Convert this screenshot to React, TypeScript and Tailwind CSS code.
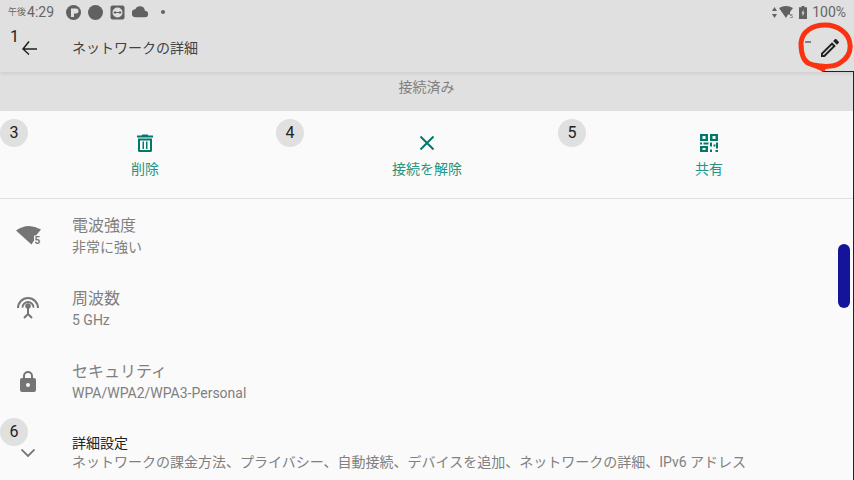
import type { ReactNode } from 'react'

const fontStack = '[font-family:Roboto,"Noto_Sans_CJK_JP",sans-serif]'

function Badge({ n, className }: { n: string; className: string }) {
  return (
    <div className={`absolute w-[28px] h-[28px] rounded-full bg-[#e0e0e0] text-[#222] text-base flex items-center justify-center ${className}`}>
      {n}
    </div>
  )
}

function TrashIcon() {
  return (
    <svg width="16" height="18" viewBox="0 0 16 18" fill="#00796b">
      <path d="M0 1.500h4.500L5.500 0.500h5l1 1H16v2H0z" />
      <path fillRule="evenodd" d="M1 4.500h14V16.500a1.500 1.500 0 0 1-1.500 1.500h-11A1.500 1.500 0 0 1 1 16.500zM3 6.500v9.500h10V6.500z" />
      <path d="M5.500 7.500h1.500v7.500H5.500zM9 7.500h1.500v7.500H9z" />
    </svg>
  )
}

function CloseIcon() {
  return (
    <svg width="14" height="14" viewBox="0 0 14 14" fill="none" stroke="#00796b" strokeWidth="2">
      <path d="M0.500 0.500L13.500 13.500M13.500 0.500L0.500 13.500" />
    </svg>
  )
}

function QrIcon() {
  return (
    <svg width="18" height="18" viewBox="0 0 18 18" fill="#00796b">
      <path fillRule="evenodd" d="M0 0h8v7H0zM2.500 2v3h3V2zM10 0h8v7h-8zM12.500 2v3h3V2zM0 12h8v6H0zM2.500 14v2h3v-2z" />
      <path d="M0 8.500h2v2H0zM3.500 8.500h5v2h-5zM10 8.500h2v4h-2zM13.500 10.500h2v2h-2zM16 8.500h2v6h-2zM10 15.500h2V18h-2zM15.500 16h2.500v2h-2.500z" />
    </svg>
  )
}

function Action({ icon, label }: { icon: ReactNode; label: string }) {
  return (
    <div className="flex-1 flex flex-col items-center pt-[21px]">
      <div className="h-[22px] flex items-center justify-center">{icon}</div>
      <span className="mt-[5px] text-sm leading-[20px] text-[#26957f]">{label}</span>
    </div>
  )
}

function Row({ icon, title, sub }: { icon: ReactNode; title: string; sub: string }) {
  return (
    <div className="h-[73px] flex items-center">
      <div className="w-[72px] pl-[16px] flex items-center">
        <div className="w-[24px] h-[24px] flex items-center justify-center">{icon}</div>
      </div>
      <div className="pb-[2px]">
        <div className="text-base leading-[24px] text-[#808080]">{title}</div>
        <div className="text-sm leading-[18px] text-[#808080]">{sub}</div>
      </div>
    </div>
  )
}

export default function App() {
  return (
    <div className={`relative w-[854px] h-[480px] overflow-hidden bg-[#fafafa] ${fontStack}`}>
      <div className="relative z-10 bg-[#e0e0e0] shadow-[0_2px_3px_rgba(0,0,0,0.08)]">
        {/* status bar */}
        <div className="h-[24px] flex items-center pl-[8px] pr-[8px] text-[#666]">
          <span className="text-[9px] mt-[2px] mr-[1px]">午後</span>
          <span className="text-sm">4:29</span>
          <div className="ml-[12px] flex items-center gap-[7px]">
            <svg width="15" height="15" viewBox="0 0 15 15">
              <circle cx="7.500" cy="7.500" r="7.500" fill="#616161" />
              <path d="M5 3.500h5a2.500 2.500 0 0 1 0 5H8v3.500H5z" fill="#e0e0e0" />
            </svg>
            <div className="w-[15px] h-[15px] rounded-full bg-[#616161]" />
            <svg width="15" height="15" viewBox="0 0 15 15">
              <rect width="14" height="14" x="0.500" y="0.500" rx="2" fill="#616161" />
              <circle cx="7.500" cy="7.500" r="5" fill="#e0e0e0" />
              <path d="M4 7.500h7M5.500 6l-1.500 1.500 1.500 1.500M9.500 6l1.500 1.500-1.500 1.500" stroke="#616161" fill="none" />
            </svg>
            <svg width="16" height="12" viewBox="0 0 24 18" fill="#616161">
              <path d="M19.400 7A7.500 7.500 0 0 0 5 5 6 6 0 0 0 6 17h13a5 5 0 0 0 .4-10z" />
            </svg>
          </div>
          <div className="ml-[13px] w-[4px] h-[4px] rounded-full bg-[#616161]" />
          <div className="ml-auto flex items-center">
            <svg width="5" height="11" viewBox="0 0 5 11" fill="#616161">
              <path d="M2.500 0L5 4H0zM2.500 11L0 7h5z" />
            </svg>
            <svg className="ml-[2px]" width="16" height="14" viewBox="0 0 16 14" fill="#616161">
              <path d="M0 3Q7-1 14 3L11 7V9.500H9L7 13z" />
              <text x="10.500" y="12.500" fontSize="6" fill="#616161">5</text>
            </svg>
            <svg className="ml-[4px]" width="8" height="13" viewBox="0 0 8 13">
              <path d="M2.500 0h3v1.200H8V13H0V1.200h2.500z" fill="#616161" />
              <path d="M4.500 3.500L2.500 7.500h1.200L3.500 10.500l2-4H4.300z" fill="#e0e0e0" />
            </svg>
            <span className="ml-[5px] text-sm">100%</span>
          </div>
        </div>
        {/* toolbar */}
        <div className="h-[48px] flex items-center">
          <div className="w-[72px] pl-[22px]">
            <svg width="15" height="16" viewBox="0 0 15 16" fill="none" stroke="#212121" strokeWidth="1.500">
              <path d="M15 9H1.500M7 1.500L1 9l6 5.500" />
            </svg>
          </div>
          <span className="text-sm text-[#424242]">ネットワークの詳細</span>
          <svg className="ml-auto mr-[12px]" width="24" height="24" viewBox="0 0 24 24" fill="#212121">
            <path d="M14.060 9.020l.92.92L5.920 19H5v-.92l9.060-9.060M17.660 3c-.25 0-.51.100-.7.290l-1.830 1.830 3.750 3.750 1.830-1.830c.39-.39.39-1.020 0-1.410l-2.340-2.340c-.2-.2-.45-.29-.71-.29zm-3.600 3.190L3 17.250V21h3.750L17.810 9.940l-3.750-3.750z" />
          </svg>
        </div>
      </div>

      <div className="h-[39px] bg-[#e0e0e0] flex items-end justify-center pb-[15px] pr-[1px] text-sm leading-[18px] text-[#808080]">
        接続済み
      </div>

      <div className="h-[88px] px-[4px] flex border-b border-[#e0e0e0]">
        <Action icon={<TrashIcon />} label="削除" />
        <Action icon={<CloseIcon />} label="接続を解除" />
        <Action icon={<QrIcon />} label="共有" />
      </div>

      <Row
        icon={
          <svg className="shrink-0" width="26" height="22" viewBox="0 0 26 22" fill="#757575">
            <path d="M1 5.500Q13-3 26 4.500L21 10.500H19V15.500L16.500 19.500z" />
            <text x="19.500" y="18.500" fontSize="10" fontWeight="700" fill="#757575">5</text>
          </svg>
        }
        title="電波強度"
        sub="非常に強い"
      />
      <Row
        icon={
          <svg width="24" height="24" viewBox="0 0 24 24" fill="none" stroke="#757575" strokeWidth="2">
            <path d="M2 11A10 10 0 0 1 22 11M6.500 10.500A5.500 5.500 0 0 1 17.500 10.500" />
            <circle cx="12" cy="9" r="2.800" fill="#757575" stroke="none" />
            <path d="M12 9v8.500M12 17l-4 4M12 17l4 4" />
          </svg>
        }
        title="周波数"
        sub="5 GHz"
      />
      <Row
        icon={
          <svg width="24" height="24" viewBox="0 0 24 24" fill="#757575">
            <path fillRule="evenodd" d="M18 8h-1V6A5 5 0 0 0 7 6v2H6a2 2 0 0 0-2 2v10a2 2 0 0 0 2 2h12a2 2 0 0 0 2-2V10a2 2 0 0 0-2-2zM9 6a3 3 0 0 1 6 0v2H9zM12 17a2 2 0 1 1 0-4 2 2 0 0 1 0 4z" />
          </svg>
        }
        title="セキュリティ"
        sub="WPA/WPA2/WPA3-Personal"
      />
      <div className="flex h-[62px] pt-[15px]">
        <div className="w-[72px] pl-[21px] pt-[16px]">
          <svg width="14" height="8" viewBox="0 0 14 8" fill="none" stroke="#757575" strokeWidth="1.800">
            <path d="M0.500 0.500L7 7l6.500-6.500" />
          </svg>
        </div>
        <div className="whitespace-nowrap">
          <div className="text-sm leading-[20px] text-[#212121]">詳細設定</div>
          <div className="text-sm leading-[18px] text-[#808080]">ネットワークの課金方法、プライバシー、自動接続、デバイスを追加、ネットワークの詳細、IPv6 アドレス</div>
        </div>
      </div>

      {/* annotations on top of the screenshot */}
      <div className="absolute z-20 left-[10px] top-[25px] text-base text-[#222]">1</div>
      <Badge n="3" className="left-0 top-[119px]" />
      <Badge n="4" className="left-[276px] top-[119px]" />
      <Badge n="5" className="left-[558px] top-[119px]" />
      <Badge n="6" className="left-0 top-[418px]" />
      <div className="absolute z-20 left-[822px] top-[71px] w-[32px] h-[409px] border-t border-r border-[#12129e]" />
      <div className="absolute z-20 left-[838px] top-[244px] w-[12px] h-[64px] rounded-[6px] bg-[#14149a]" />
      <svg className="absolute z-20 left-[798px] top-[22px]" width="56" height="50" viewBox="0 0 56 50" fill="none">
        <path d="M15 43C25 45 36 45 42 41C50 36 53 30 52 22C51 11 40 3 27 3C15 3 4 9 3 21C3 30 5 38 10 41C14 43 20 44 25 47" stroke="#f93312" strokeWidth="5" strokeLinecap="round" />
        <path d="M7 20h6" stroke="#222" strokeWidth="1" />
      </svg>
    </div>
  )
}
